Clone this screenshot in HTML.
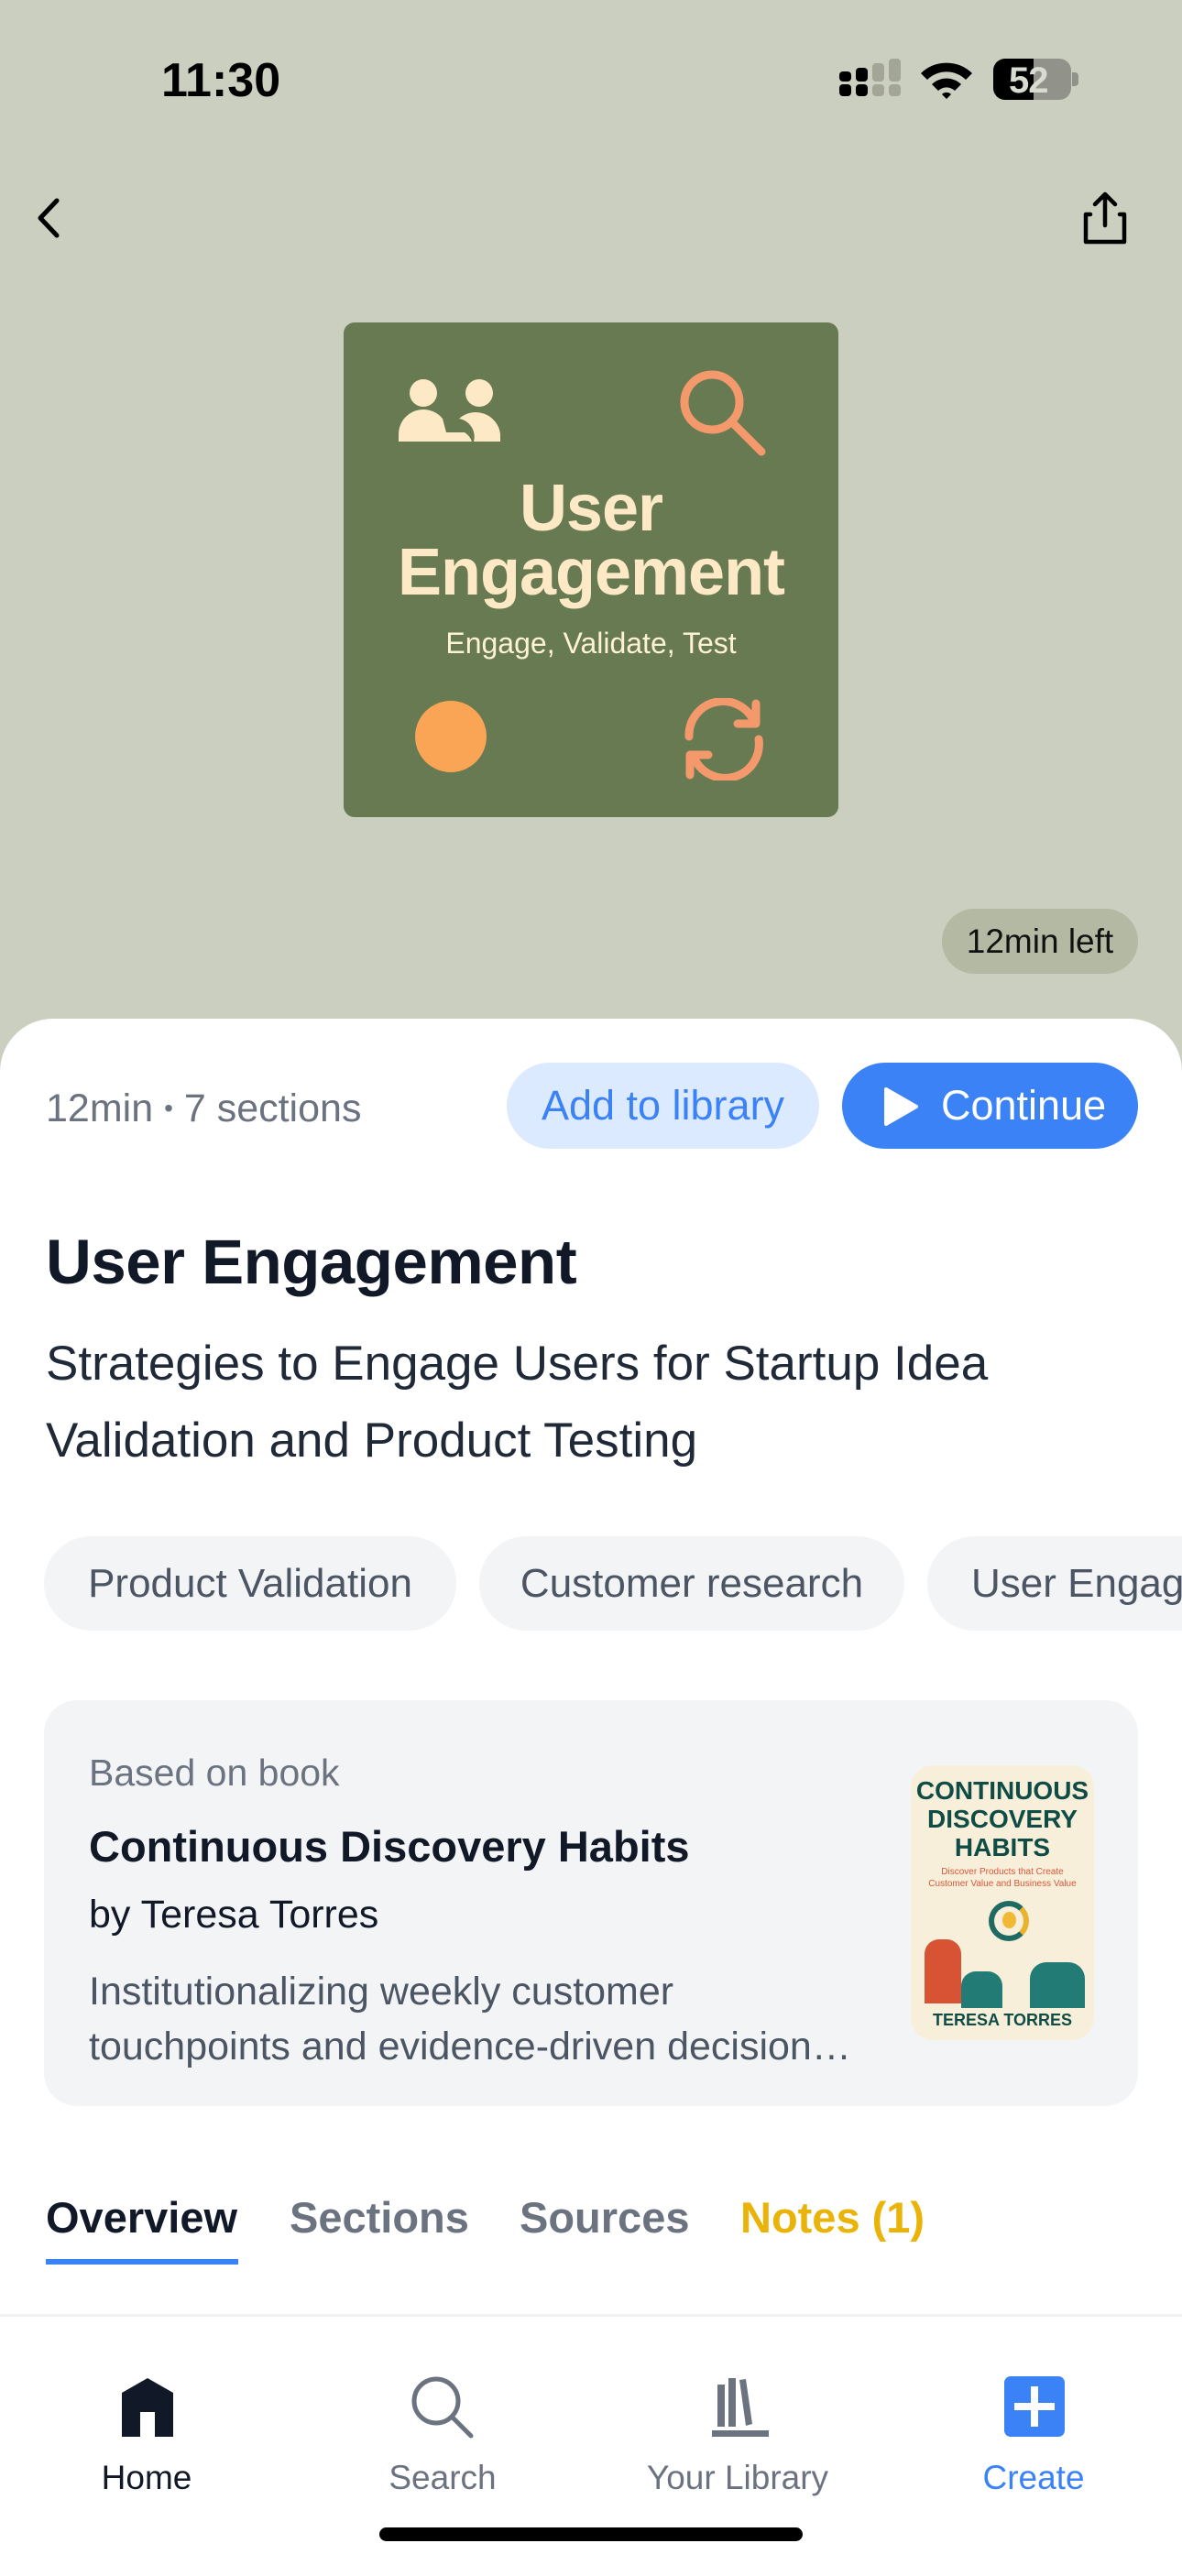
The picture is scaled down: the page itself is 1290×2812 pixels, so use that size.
<!DOCTYPE html>
<html><head><meta charset="utf-8"><style>
*{margin:0;padding:0;box-sizing:border-box}
body{width:1290px;height:2796px;background:#cbcfbf;position:relative;overflow:hidden;font-family:"Liberation Sans",sans-serif}
.a{position:absolute;white-space:nowrap}
</style></head><body>
<div class="a" style="left:176px;top:58px;font-size:52px;font-weight:bold;color:#000">11:30</div>
<div class="a" style="left:916px;top:64px;width:64px;height:46px">
<div class="a" style="left:0;top:28px;width:13px;height:13px;background:#000;border-radius:4px"></div>
<div class="a" style="left:0;top:14px;width:13px;height:11px;background:#000;border-radius:4px"></div>
<div class="a" style="left:18px;top:10px;width:13px;height:15px;background:#000;border-radius:4px"></div>
<div class="a" style="left:18px;top:28px;width:13px;height:13px;background:#000;border-radius:4px"></div>
<div class="a" style="left:36px;top:5px;width:13px;height:20px;background:#a3a696;border-radius:4px"></div>
<div class="a" style="left:36px;top:28px;width:13px;height:13px;background:#a3a696;border-radius:4px"></div>
<div class="a" style="left:54px;top:0;width:13px;height:25px;background:#a3a696;border-radius:4px"></div>
<div class="a" style="left:54px;top:28px;width:13px;height:13px;background:#a3a696;border-radius:4px"></div>
</div>
<svg class="a" style="left:1003px;top:64px" width="60" height="44" viewBox="0 0 60 44"><path d="M2 16 A40 40 0 0 1 58 16 L51 23 A30 30 0 0 0 9 23Z M14 28 A23 23 0 0 1 46 28 L39 35 A13 13 0 0 0 21 35Z M25 39 A7 7 0 0 1 35 39 L30 44Z" fill="#000"/></svg>
<div class="a" style="left:1084px;top:64px;width:85px;height:45px;border-radius:13px;background:#91938a;overflow:hidden">
<div class="a" style="left:0;top:0;width:44px;height:45px;background:#000"></div>
<div class="a" style="left:17px;top:2px;font-size:40px;font-weight:bold;color:#d8dbd0;letter-spacing:-1px">52</div></div>
<div class="a" style="left:1170px;top:79px;width:7px;height:15px;background:#91938a;border-radius:0 4px 4px 0"></div>
<svg class="a" style="left:34px;top:215px" width="36" height="46" viewBox="0 0 36 46"><path d="M28 4 L10 23 L28 42" stroke="#000" stroke-width="5" fill="none" stroke-linecap="round" stroke-linejoin="round"/></svg>
<svg class="a" style="left:1181px;top:208px" width="50" height="60" viewBox="0 0 50 60"><path d="M25 5 V38 M14 15 L25 4 L36 15 M9 26 H4 V56 H46 V26 H41" stroke="#000" stroke-width="4.5" fill="none" stroke-linecap="round" stroke-linejoin="round"/></svg>
<div class="a" style="left:375px;top:352px;width:540px;height:540px;background:#677a52;border-radius:12px">
<svg class="a" style="left:60px;top:60px" width="115" height="70" viewBox="0 0 115 70"><circle cx="27" cy="17" r="15" fill="#fde9c6"/><circle cx="88" cy="17" r="15" fill="#fde9c6"/><path d="M0 70 V62 A27 27 0 0 1 48 45 L52 60 L72 60 A20 20 0 0 1 80 70 Z" fill="#fde9c6"/><path d="M66 45 A27 27 0 0 1 111 62 V70 H82 A20 20 0 0 0 66 45Z" fill="#fde9c6"/></svg>
<svg class="a" style="left:365px;top:50px" width="100" height="100" viewBox="0 0 100 100"><circle cx="37" cy="37" r="30" stroke="#f4996b" stroke-width="9" fill="none"/><path d="M58 58 L91 91" stroke="#f4996b" stroke-width="9" stroke-linecap="round"/></svg>
<div class="a" style="left:0;width:540px;text-align:center;top:168px;font-size:72px;font-weight:bold;color:#fde9c6;line-height:70px;letter-spacing:-1px">User<br>Engagement</div>
<div class="a" style="left:0;width:540px;text-align:center;top:332px;font-size:32px;color:#fdf1d6">Engage, Validate, Test</div>
<div class="a" style="left:78px;top:413px;width:78px;height:78px;border-radius:50%;background:#f9a555"></div>
<svg class="a" style="left:370px;top:410px" width="90" height="90" viewBox="0 0 90 90"><path d="M7 42 A37 37 0 0 1 78 26 M83 45 A37 37 0 0 1 12 64" stroke="#f4996b" stroke-width="9" fill="none" stroke-linecap="round"/><path d="M80 6 V28 H60 M8 84 V62 H28" stroke="#f4996b" stroke-width="9" fill="none" stroke-linecap="round" stroke-linejoin="round"/></svg>
</div>
<div class="a" style="left:1028px;top:992px;width:214px;height:71px;border-radius:36px;background:#b3b9a2;font-size:37px;color:#111;text-align:center;line-height:71px">12min left</div>
<div class="a" style="left:0;top:1112px;width:1290px;height:1700px;background:#fff;border-radius:58px 58px 0 0"></div>
<div class="a" style="left:50px;top:1186px;font-size:43px;color:#6b7280">12min <span style="font-size:28px;vertical-align:5px">•</span> 7 sections</div>
<div class="a" style="left:553px;top:1160px;width:341px;height:94px;border-radius:47px;background:#dbeafe;color:#3b82f6;font-size:45px;text-align:center;line-height:94px">Add to library</div>
<div class="a" style="left:919px;top:1160px;width:323px;height:94px;border-radius:47px;background:#3b82f6;color:#fff;font-size:45px;line-height:94px;padding-left:108px">Continue</div>
<svg class="a" style="left:964px;top:1186px" width="40" height="44" viewBox="0 0 40 44"><path d="M3 3 L36 22 L3 41Z" fill="#fff" stroke="#fff" stroke-width="4" stroke-linejoin="round"/></svg>
<div class="a" style="left:50px;top:1338px;font-size:69px;font-weight:bold;color:#111827;letter-spacing:-0.5px">User Engagement</div>
<div class="a" style="left:50px;top:1447px;font-size:53px;color:#1f2937;line-height:84px">Strategies to Engage Users for Startup Idea<br>Validation and Product Testing</div>
<div class="a" style="left:48px;top:1677px;width:450px;height:103px;border-radius:52px;background:#f3f4f6;font-size:44px;color:#4b5563;text-align:center;line-height:103px">Product Validation</div>
<div class="a" style="left:523px;top:1677px;width:464px;height:103px;border-radius:52px;background:#f3f4f6;font-size:44px;color:#4b5563;text-align:center;line-height:103px">Customer research</div>
<div class="a" style="left:1012px;top:1677px;width:278px;height:103px;border-radius:52px 0 0 52px;background:#f3f4f6;font-size:44px;color:#4b5563;line-height:103px;padding-left:48px;overflow:hidden">User Engagement</div>
<div class="a" style="left:48px;top:1856px;width:1194px;height:443px;border-radius:36px;background:#f3f4f6"></div>
<div class="a" style="left:97px;top:1912px;font-size:41px;color:#6b7280">Based on book</div>
<div class="a" style="left:97px;top:1988px;font-size:47px;font-weight:bold;color:#111827">Continuous Discovery Habits</div>
<div class="a" style="left:97px;top:2066px;font-size:43px;color:#111827">by Teresa Torres</div>
<div class="a" style="left:97px;top:2144px;font-size:43px;color:#4b5563;line-height:60px">Institutionalizing weekly customer<br>touchpoints and evidence-driven decision…</div>
<div class="a" style="left:994px;top:1927px;width:200px;height:300px;border-radius:24px;background:#f8efda;overflow:hidden">
<div class="a" style="left:0;width:200px;top:12px;text-align:center;font-size:28px;font-weight:bold;color:#0f4c45;line-height:31px">CONTINUOUS<br>DISCOVERY<br>HABITS</div>
<div class="a" style="left:0;width:200px;top:110px;text-align:center;font-size:10px;color:#d9563a;line-height:13px">Discover Products that Create<br>Customer Value and Business Value</div>
<div class="a" style="left:85px;top:148px;width:44px;height:44px;border-radius:50%;border:6px solid #1f6b63;border-right-color:#e8b430"></div>
<div class="a" style="left:100px;top:160px;width:15px;height:18px;border-radius:50%;background:#f1b833"></div>
<div class="a" style="left:15px;top:190px;width:40px;height:70px;background:#d85333;border-radius:16px 16px 0 0"></div>
<div class="a" style="left:55px;top:225px;width:45px;height:40px;background:#237b75;border-radius:16px 16px 0 0"></div>
<div class="a" style="left:130px;top:215px;width:60px;height:50px;background:#237b75;border-radius:18px 18px 0 0"></div>
<div class="a" style="left:0;width:200px;top:268px;text-align:center;font-size:18px;font-weight:bold;color:#0f4c45">TERESA TORRES</div>
</div>
<div class="a" style="left:50px;top:2393px;font-size:47px;font-weight:bold;color:#111827">Overview</div>
<div class="a" style="left:316px;top:2393px;font-size:47px;font-weight:bold;color:#6b7280">Sections</div>
<div class="a" style="left:567px;top:2393px;font-size:47px;font-weight:bold;color:#6b7280">Sources</div>
<div class="a" style="left:808px;top:2393px;font-size:47px;font-weight:bold;color:#eab308">Notes (1)</div>
<div class="a" style="left:50px;top:2466px;width:210px;height:6px;background:#3b82f6"></div>
<div class="a" style="left:0;top:2526px;width:1290px;height:3px;background:#f1f2f4"></div>
<svg class="a" style="left:133px;top:2596px" width="56" height="66" viewBox="0 0 56 66"><path d="M0 16 L28 0 L56 16 V64 H36 V37 H20 V64 H0Z" fill="#111827"/></svg>
<svg class="a" style="left:447px;top:2592px" width="72" height="72" viewBox="0 0 72 72"><circle cx="29" cy="29" r="24" stroke="#6b7280" stroke-width="5" fill="none"/><path d="M46 46 L67 67" stroke="#6b7280" stroke-width="5" stroke-linecap="round"/></svg>
<svg class="a" style="left:775px;top:2596px" width="66" height="66" viewBox="0 0 66 66"><rect x="8" y="7" width="8" height="46" fill="#6b7280"/><rect x="20" y="0" width="8" height="53" fill="#6b7280"/><path d="M32 2 L39 1 L46 50 L39 52Z" fill="#6b7280"/><rect x="2" y="57" width="62" height="7" fill="#6b7280"/></svg>
<div class="a" style="left:1096px;top:2594px;width:66px;height:66px;border-radius:7px;background:#3b82f6"></div>
<div class="a" style="left:1125px;top:2605px;width:8px;height:44px;background:#fff"></div>
<div class="a" style="left:1107px;top:2623px;width:44px;height:8px;background:#fff"></div>
<div class="a" style="left:60px;width:200px;text-align:center;top:2684px;font-size:37px;color:#111827">Home</div>
<div class="a" style="left:383px;width:200px;text-align:center;top:2684px;font-size:37px;color:#6b7280">Search</div>
<div class="a" style="left:685px;width:240px;text-align:center;top:2684px;font-size:37px;color:#6b7280">Your Library</div>
<div class="a" style="left:1028px;width:200px;text-align:center;top:2684px;font-size:37px;color:#3b82f6">Create</div>
<div class="a" style="left:414px;top:2759px;width:462px;height:15px;border-radius:8px;background:#000"></div>
</body></html>
